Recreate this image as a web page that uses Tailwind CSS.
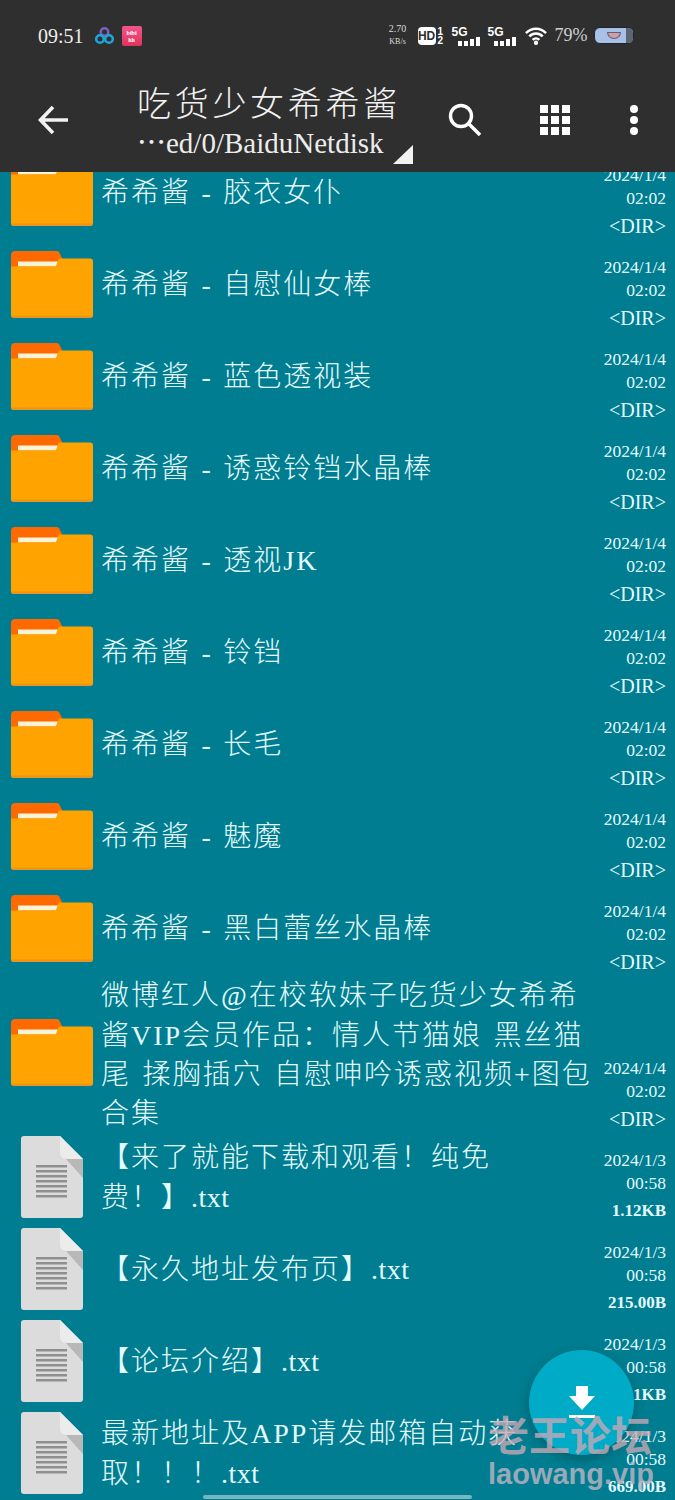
<!DOCTYPE html>
<html lang="zh-CN">
<head>
<meta charset="UTF-8">
<meta name="viewport" content="width=device-width, initial-scale=1.0">
<title>吃货少女希希酱</title>
<script src="https://cdn.jsdelivr.net/npm/@tailwindcss/browser@4"></script>
</head>
<body class="bg-[#007d90]">
<svg class="hidden">
  <symbol id="folder" viewBox="0 0 82 67">
    <path d="M0 4a4 4 0 0 1 4-4h41a4 4 0 0 1 4 3l3 6v16H0z" fill="#ff6a00"/>
    <path d="M7 10.500h40l-2 5H7z" fill="#fff3d6"/>
    <path d="M0 15.500h45l3-8h31a3 3 0 0 1 3 3v53.500a3 3 0 0 1-3 3H3a3 3 0 0 1-3-3z" fill="#ffa300"/>
    <path d="M0 64.500h82a3 3 0 0 1-3 2.500H3a3 3 0 0 1-3-2.500z" fill="#e8961e"/>
  </symbol>
  <symbol id="file" viewBox="0 0 62 82">
    <path d="M3 0h36l23 23v56a3 3 0 0 1-3 3H3a3 3 0 0 1-3-3V3a3 3 0 0 1 3-3z" fill="#dcdcdc"/>
    <path d="M39 0l23 23H45a6 6 0 0 1-6-6z" fill="#ececec"/>
    <path d="M45 23h17v19z" fill="#b8b8b8"/>
    <path d="M15 29h31v2.500H15zM15 34h31v2.500H15zM15 39h31v2.500H15zM15 44h31v2.500H15zM15 49h31v2.500H15zM15 54h31v2.500H15zM15 59h31v2.500H15z" fill="#8f8f8f"/>
  </symbol>
</svg>

<div class="relative w-[675px] h-[1500px] overflow-hidden font-['Liberation_Serif','Noto_Sans_CJK_SC',serif]">
  <!-- top bar -->
  <header class="relative z-10 h-[172px] bg-[#2f2f2f] text-white">
    <div class="flex items-center h-[70px] pl-[38px] pt-[1px]">
      <span class="text-[20px] text-[#eeeeee]">09:51</span>
      <svg class="ml-[11px] w-[19px] h-[19px]" viewBox="0 0 19 19" fill="none" stroke-width="2.600">
        <circle cx="9.500" cy="6" r="3.800" stroke="#7a5fc0"/>
        <circle cx="5" cy="13" r="3.800" stroke="#1ea5d8"/>
        <circle cx="14" cy="13" r="3.800" stroke="#1ea5d8"/>
      </svg>
      <div class="ml-[8px] w-[20px] h-[20px] rounded-[2px] bg-gradient-to-b from-[#f0568c] to-[#e2305a] text-[6px] leading-[7px] text-center text-white font-bold pt-[4px]">bibi<br>hh</div>
      <div class="ml-[245px] w-[22px] text-[10px] leading-[12px] text-center text-[#dddddd]">2.70<br><span class="text-[8px]">KB/s</span></div>
      <div class="ml-[9px] w-[18px] h-[18px] rounded-[4px] bg-white text-[#2f2f2f] text-[12px] leading-[18px] text-center font-bold font-['Liberation_Sans',sans-serif]">HD</div>
      <div class="ml-[2px] w-[7px] text-[10px] leading-[9px] font-bold font-['Liberation_Sans',sans-serif]">1<br>2</div>
      <div class="ml-[7px] relative w-[29px] h-[20px]">
        <span class="absolute left-0 top-[-3px] text-[12px] font-bold font-['Liberation_Sans',sans-serif]">5G</span>
        <svg class="absolute left-[6px] bottom-0 w-[23px] h-[9px]" viewBox="0 0 23 9" fill="#fff"><rect y="4" width="4" height="5"/><rect x="6" y="4" width="4" height="5"/><rect x="12" y="2" width="4" height="7"/><rect x="18" width="4" height="9"/></svg>
      </div>
      <div class="ml-[7px] relative w-[29px] h-[20px]">
        <span class="absolute left-0 top-[-3px] text-[12px] font-bold font-['Liberation_Sans',sans-serif]">5G</span>
        <svg class="absolute left-[6px] bottom-0 w-[23px] h-[9px]" viewBox="0 0 23 9" fill="#fff"><rect y="4" width="4" height="5"/><rect x="6" y="4" width="4" height="5"/><rect x="12" y="2" width="4" height="7"/><rect x="18" width="4" height="9"/></svg>
      </div>
      <svg class="ml-[8px] w-[22px] h-[18px]" viewBox="0 0 23 18" fill="none" stroke="#fff" stroke-width="2.600">
        <path d="M1 6c6-6 15-6 21 0"/><path d="M4.500 9.500c4-4 10-4 14 0"/><path d="M8 13c2-2 5-2 7 0"/><circle cx="11.500" cy="16" r="1" fill="#fff"/>
      </svg>
      <span class="ml-[8px] text-[18px] text-[#cfcfcf]">79%</span>
      <div class="ml-[6px] relative w-[40px] h-[17px] rounded-[6px] bg-[#a9c1e6] border border-[#1b2433] overflow-hidden">
        <div class="absolute right-0 top-0 w-[7px] h-full bg-[#5c6470]"></div>
        <div class="absolute left-[12px] top-[4px] w-[14px] h-[7px] rounded-b-full bg-[#d79aa6] border border-[#54627a]"></div>
      </div>
    </div>
    <div class="flex items-start">
      <svg class="ml-[38px] mt-[35px] w-[30px] h-[30px]" viewBox="0 0 30 30" fill="none" stroke="#f2f2f2" stroke-width="3.600"><path d="M30 15H3M15 2 2.500 15 15 28"/></svg>
      <div class="ml-[69px] w-[290px] mt-[13px]">
        <div class="text-[34px] leading-[44px] tracking-[3.700px] font-light text-[#f2f2f2] whitespace-nowrap">吃货少女希希酱</div>
        <div class="text-[29px] leading-[32px] text-[#ececec] whitespace-nowrap">⋯ed/0/BaiduNetdisk</div>
      </div>
      <svg class="ml-[21px] mt-[33px] w-[33px] h-[33px]" viewBox="0 0 33 33" fill="none" stroke="#fff" stroke-width="3.400"><circle cx="13" cy="13" r="10.500"/><path d="M20.500 20.500 32 32"/></svg>
      <svg class="ml-[59px] mt-[35px] w-[30px] h-[30px]" viewBox="0 0 30 30" fill="#fff"><path d="M0 0h8v8H0zM11 0h8v8h-8zM22 0h8v8h-8zM0 11h8v8H0zM11 11h8v8h-8zM22 11h8v8h-8zM0 22h8v8H0zM11 22h8v8h-8zM22 22h8v8h-8z"/></svg>
      <svg class="ml-[59px] mt-[35px] w-[10px] h-[30px]" viewBox="0 0 10 30" fill="#fff"><circle cx="5" cy="4" r="4"/><circle cx="5" cy="15" r="4"/><circle cx="5" cy="26" r="4"/></svg>
    </div>
    <svg class="absolute left-[393px] top-[145px] w-[20px] h-[19px]" viewBox="0 0 20 19" fill="#f2f2f2"><path d="M20 0v19H0z"/></svg>
  </header>

  <!-- file list -->
  <main class="h-[1328px] overflow-hidden text-[#e4fbff]">
    <div class="-mt-[27px]">
      <div class="flex h-[92px]">
        <div class="w-[101px] pl-[11px] pt-[2px] flex items-center"><svg class="w-[82px] h-[67px]"><use href="#folder"/></svg></div>
        <div class="flex-1 flex items-center pt-[4px] text-[28px] tracking-[2px] [word-spacing:1.500px] font-light whitespace-nowrap">希希酱 - 胶衣女仆</div>
        <div class="w-[80px] pr-[9px] flex flex-col justify-end items-end text-[17.500px] leading-[23px]"><span>2024/1/4</span><span>02:02</span><span class="mt-[5px] leading-[22px] text-[20px]">&lt;DIR&gt;</span></div>
      </div>
      <div class="flex h-[92px]">
        <div class="w-[101px] pl-[11px] pt-[2px] flex items-center"><svg class="w-[82px] h-[67px]"><use href="#folder"/></svg></div>
        <div class="flex-1 flex items-center pt-[4px] text-[28px] tracking-[2px] [word-spacing:1.500px] font-light whitespace-nowrap">希希酱 - 自慰仙女棒</div>
        <div class="w-[80px] pr-[9px] flex flex-col justify-end items-end text-[17.500px] leading-[23px]"><span>2024/1/4</span><span>02:02</span><span class="mt-[5px] leading-[22px] text-[20px]">&lt;DIR&gt;</span></div>
      </div>
      <div class="flex h-[92px]">
        <div class="w-[101px] pl-[11px] pt-[2px] flex items-center"><svg class="w-[82px] h-[67px]"><use href="#folder"/></svg></div>
        <div class="flex-1 flex items-center pt-[4px] text-[28px] tracking-[2px] [word-spacing:1.500px] font-light whitespace-nowrap">希希酱 - 蓝色透视装</div>
        <div class="w-[80px] pr-[9px] flex flex-col justify-end items-end text-[17.500px] leading-[23px]"><span>2024/1/4</span><span>02:02</span><span class="mt-[5px] leading-[22px] text-[20px]">&lt;DIR&gt;</span></div>
      </div>
      <div class="flex h-[92px]">
        <div class="w-[101px] pl-[11px] pt-[2px] flex items-center"><svg class="w-[82px] h-[67px]"><use href="#folder"/></svg></div>
        <div class="flex-1 flex items-center pt-[4px] text-[28px] tracking-[2px] [word-spacing:1.500px] font-light whitespace-nowrap">希希酱 - 诱惑铃铛水晶棒</div>
        <div class="w-[80px] pr-[9px] flex flex-col justify-end items-end text-[17.500px] leading-[23px]"><span>2024/1/4</span><span>02:02</span><span class="mt-[5px] leading-[22px] text-[20px]">&lt;DIR&gt;</span></div>
      </div>
      <div class="flex h-[92px]">
        <div class="w-[101px] pl-[11px] pt-[2px] flex items-center"><svg class="w-[82px] h-[67px]"><use href="#folder"/></svg></div>
        <div class="flex-1 flex items-center pt-[4px] text-[28px] tracking-[2px] [word-spacing:1.500px] font-light whitespace-nowrap">希希酱 - 透视JK</div>
        <div class="w-[80px] pr-[9px] flex flex-col justify-end items-end text-[17.500px] leading-[23px]"><span>2024/1/4</span><span>02:02</span><span class="mt-[5px] leading-[22px] text-[20px]">&lt;DIR&gt;</span></div>
      </div>
      <div class="flex h-[92px]">
        <div class="w-[101px] pl-[11px] pt-[2px] flex items-center"><svg class="w-[82px] h-[67px]"><use href="#folder"/></svg></div>
        <div class="flex-1 flex items-center pt-[4px] text-[28px] tracking-[2px] [word-spacing:1.500px] font-light whitespace-nowrap">希希酱 - 铃铛</div>
        <div class="w-[80px] pr-[9px] flex flex-col justify-end items-end text-[17.500px] leading-[23px]"><span>2024/1/4</span><span>02:02</span><span class="mt-[5px] leading-[22px] text-[20px]">&lt;DIR&gt;</span></div>
      </div>
      <div class="flex h-[92px]">
        <div class="w-[101px] pl-[11px] pt-[2px] flex items-center"><svg class="w-[82px] h-[67px]"><use href="#folder"/></svg></div>
        <div class="flex-1 flex items-center pt-[4px] text-[28px] tracking-[2px] [word-spacing:1.500px] font-light whitespace-nowrap">希希酱 - 长毛</div>
        <div class="w-[80px] pr-[9px] flex flex-col justify-end items-end text-[17.500px] leading-[23px]"><span>2024/1/4</span><span>02:02</span><span class="mt-[5px] leading-[22px] text-[20px]">&lt;DIR&gt;</span></div>
      </div>
      <div class="flex h-[92px]">
        <div class="w-[101px] pl-[11px] pt-[2px] flex items-center"><svg class="w-[82px] h-[67px]"><use href="#folder"/></svg></div>
        <div class="flex-1 flex items-center pt-[4px] text-[28px] tracking-[2px] [word-spacing:1.500px] font-light whitespace-nowrap">希希酱 - 魅魔</div>
        <div class="w-[80px] pr-[9px] flex flex-col justify-end items-end text-[17.500px] leading-[23px]"><span>2024/1/4</span><span>02:02</span><span class="mt-[5px] leading-[22px] text-[20px]">&lt;DIR&gt;</span></div>
      </div>
      <div class="flex h-[92px]">
        <div class="w-[101px] pl-[11px] pt-[2px] flex items-center"><svg class="w-[82px] h-[67px]"><use href="#folder"/></svg></div>
        <div class="flex-1 flex items-center pt-[4px] text-[28px] tracking-[2px] [word-spacing:1.500px] font-light whitespace-nowrap">希希酱 - 黑白蕾丝水晶棒</div>
        <div class="w-[80px] pr-[9px] flex flex-col justify-end items-end text-[17.500px] leading-[23px]"><span>2024/1/4</span><span>02:02</span><span class="mt-[5px] leading-[22px] text-[20px]">&lt;DIR&gt;</span></div>
      </div>
      <div class="flex h-[157px]">
        <div class="w-[101px] pl-[11px] pt-[2px] flex items-center"><svg class="w-[82px] h-[67px]"><use href="#folder"/></svg></div>
        <div class="flex-1 flex items-center pt-[7px] text-[28px] leading-[39.300px] tracking-[2px] [word-spacing:2.500px] font-light whitespace-nowrap"><div>微博红人@在校软妹子吃货少女希希<br>酱VIP会员作品：情人节猫娘 黑丝猫<br>尾 揉胸插穴 自慰呻吟诱惑视频+图包<br>合集</div></div>
        <div class="w-[80px] pr-[9px] flex flex-col justify-end items-end text-[17.500px] leading-[23px]"><span>2024/1/4</span><span>02:02</span><span class="mt-[5px] leading-[22px] text-[20px]">&lt;DIR&gt;</span></div>
      </div>
      <div class="flex h-[92px]">
        <div class="w-[101px] pl-[21px] pt-[2px] flex items-center"><svg class="w-[62px] h-[82px]"><use href="#file"/></svg></div>
        <div class="flex-1 flex items-center pt-[4px] text-[28px] leading-[40px] tracking-[2px] font-light whitespace-nowrap"><div>【来了就能下载和观看！纯免<br>费！】<span class="tracking-[0.500px]">.txt</span></div></div>
        <div class="w-[80px] pr-[9px] flex flex-col justify-end items-end text-[17.500px] leading-[23px]"><span>2024/1/3</span><span>00:58</span><span class="mt-[5px] leading-[22px] text-[17px] font-bold">1.12KB</span></div>
      </div>
      <div class="flex h-[92px]">
        <div class="w-[101px] pl-[21px] pt-[2px] flex items-center"><svg class="w-[62px] h-[82px]"><use href="#file"/></svg></div>
        <div class="flex-1 flex items-center pt-[4px] text-[28px] tracking-[2px] font-light whitespace-nowrap"><div>【永久地址发布页】<span class="tracking-[0.500px]">.txt</span></div></div>
        <div class="w-[80px] pr-[9px] flex flex-col justify-end items-end text-[17.500px] leading-[23px]"><span>2024/1/3</span><span>00:58</span><span class="mt-[5px] leading-[22px] text-[17px] font-bold">215.00B</span></div>
      </div>
      <div class="flex h-[92px]">
        <div class="w-[101px] pl-[21px] pt-[2px] flex items-center"><svg class="w-[62px] h-[82px]"><use href="#file"/></svg></div>
        <div class="flex-1 flex items-center pt-[4px] text-[28px] tracking-[2px] font-light whitespace-nowrap"><div>【论坛介绍】<span class="tracking-[0.500px]">.txt</span></div></div>
        <div class="w-[80px] pr-[9px] flex flex-col justify-end items-end text-[17.500px] leading-[23px]"><span>2024/1/3</span><span>00:58</span><span class="mt-[5px] leading-[22px] text-[17px] font-bold">2.41KB</span></div>
      </div>
      <div class="flex h-[92px]">
        <div class="w-[101px] pl-[21px] pt-[2px] flex items-center"><svg class="w-[62px] h-[82px]"><use href="#file"/></svg></div>
        <div class="flex-1 flex items-center pt-[4px] text-[28px] leading-[40px] tracking-[2px] font-light whitespace-nowrap"><div>最新地址及APP请发邮箱自动获<br>取！！！<span class="tracking-[0.500px]">.txt</span></div></div>
        <div class="w-[80px] pr-[9px] flex flex-col justify-end items-end text-[17.500px] leading-[23px]"><span>2024/1/3</span><span>00:58</span><span class="mt-[5px] leading-[22px] text-[17px] font-bold">669.00B</span></div>
      </div>
    </div>
  </main>

  <!-- download button -->
  <div class="absolute left-[529px] top-[1350px] w-[105px] h-[105px] rounded-full bg-[#00abc8] shadow-[0_4px_12px_rgba(0,0,0,0.25)] flex items-center justify-center">
    <svg class="w-[26px] h-[32px] -mt-[2px]" viewBox="0 0 26 32" fill="#fff"><path d="M7 0h12v10h7L13 24 0 10h7zM0 29h26v3H0z"/></svg>
  </div>

  <!-- watermark -->
  <div class="absolute left-[488px] top-[1408px] font-['Noto_Sans_CJK_SC',sans-serif] font-bold text-[41px] leading-[50px] text-[#c9a9b4]/80 whitespace-nowrap">老王论坛</div>
  <div class="absolute left-[488px] top-[1456px] font-['Liberation_Sans',sans-serif] font-bold text-[29px] leading-[36px] text-[#b7b2c0]/85 whitespace-nowrap">laowang.vip</div>

  <!-- gesture bar -->
  <div class="absolute left-[203px] top-[1495px] w-[269px] h-[4px] rounded-full bg-[#a8cfd6]/70"></div>
</div>
</body>
</html>
